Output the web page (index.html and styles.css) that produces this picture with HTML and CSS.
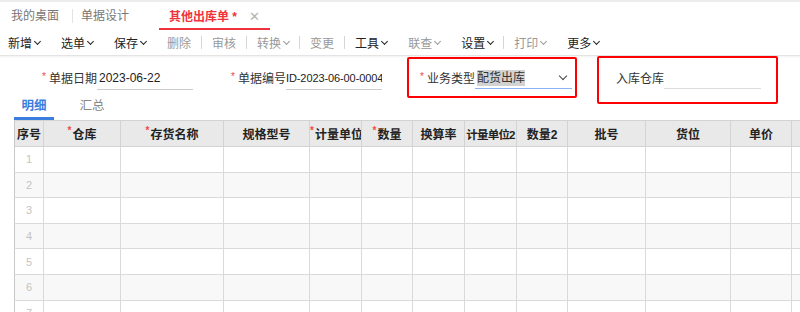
FILE: index.html
```html
<!DOCTYPE html>
<html lang="zh-CN">
<head>
  <meta charset="UTF-8">
  <title>其他出库单</title>
  <link rel="stylesheet" href="styles.css">
</head>
<body>
  <div class="page-tabs">
    <span class="page-tab">我的桌面</span>
    <span class="page-sep"></span>
    <span class="page-tab">单据设计</span>
    <span class="page-tab active">其他出库单 *<span class="close">✕</span></span>
  </div>

  <div class="toolbar">
    <span class="tb-item">新增<i class="chev"></i></span>
    <span class="tb-item">选单<i class="chev"></i></span>
    <span class="tb-item">保存<i class="chev"></i></span>
    <span class="tb-item off">删除</span><span class="tb-sep"></span>
    <span class="tb-item off">审核</span><span class="tb-sep"></span>
    <span class="tb-item off">转换<i class="chev"></i></span><span class="tb-sep"></span>
    <span class="tb-item off">变更</span><span class="tb-sep"></span>
    <span class="tb-item">工具<i class="chev"></i></span>
    <span class="tb-item off">联查<i class="chev"></i></span>
    <span class="tb-item">设置<i class="chev"></i></span><span class="tb-sep"></span>
    <span class="tb-item off">打印<i class="chev"></i></span>
    <span class="tb-item">更多<i class="chev"></i></span>
  </div>

  <div class="form-row">
    <div class="field">
      <span class="req">*</span><span class="label">单据日期</span>
      <span class="input">2023-06-22</span>
    </div>
    <div class="field">
      <span class="req">*</span><span class="label">单据编号</span>
      <span class="input small">ID-2023-06-00-0004</span>
    </div>
    <div class="field">
      <span class="req">*</span><span class="label">业务类型</span>
      <span class="input select"><span class="picked">配货出库</span><i class="chev big"></i></span>
    </div>
    <div class="field">
      <span class="req"></span><span class="label">入库仓库</span>
      <span class="input empty"></span>
    </div>
    <div class="mark mark-a"></div>
    <div class="mark mark-b"></div>
  </div>

  <div class="sub-tabs">
    <span class="sub-tab active">明细</span>
    <span class="sub-tab">汇总</span>
  </div>

  <div class="grid-wrap">
    <table class="grid">
      <colgroup>
        <col style="width:29px"><col style="width:77px"><col style="width:103px"><col style="width:86px">
        <col style="width:52px"><col style="width:51px"><col style="width:52px"><col style="width:52px">
        <col style="width:51px"><col style="width:78px"><col style="width:85px"><col style="width:61px">
        <col style="width:80px">
      </colgroup>
      <thead>
        <tr>
          <th>序号</th>
          <th><span class="star">*</span>仓库</th>
          <th><span class="star">*</span>存货名称</th>
          <th>规格型号</th>
          <th><span class="star">*</span>计量单位</th>
          <th><span class="star">*</span>数量</th>
          <th>换算率</th>
          <th class="tight">计量单位2</th>
          <th>数量2</th>
          <th>批号</th>
          <th>货位</th>
          <th>单价</th>
          <th></th>
        </tr>
      </thead>
      <tbody>
        <tr><td class="no">1</td><td></td><td></td><td></td><td></td><td></td><td></td><td></td><td></td><td></td><td></td><td></td><td></td></tr>
        <tr><td class="no">2</td><td></td><td></td><td></td><td></td><td></td><td></td><td></td><td></td><td></td><td></td><td></td><td></td></tr>
        <tr><td class="no">3</td><td></td><td></td><td></td><td></td><td></td><td></td><td></td><td></td><td></td><td></td><td></td><td></td></tr>
        <tr><td class="no">4</td><td></td><td></td><td></td><td></td><td></td><td></td><td></td><td></td><td></td><td></td><td></td><td></td></tr>
        <tr><td class="no">5</td><td></td><td></td><td></td><td></td><td></td><td></td><td></td><td></td><td></td><td></td><td></td><td></td></tr>
        <tr><td class="no">6</td><td></td><td></td><td></td><td></td><td></td><td></td><td></td><td></td><td></td><td></td><td></td><td></td></tr>
        <tr><td class="no">7</td><td></td><td></td><td></td><td></td><td></td><td></td><td></td><td></td><td></td><td></td><td></td><td></td></tr>
      </tbody>
    </table>
  </div>
</body>
</html>
```

FILE: styles.css
```css
* {
  margin: 0;
  padding: 0;
  box-sizing: border-box;
}

body {
  width: 800px;
  height: 312px;
  overflow: hidden;
  background: #fff;
  font-family: "Liberation Sans", "Noto Sans CJK SC", sans-serif;
  font-size: 12px;
  color: #333;
}

/* page tabs */
.page-tabs {
  height: 30px;
  border-top: 2px solid #ececec;
  display: flex;
  align-items: center;
  padding-left: 11px;
}

.page-tab {
  color: #777;
  height: 28px;
  line-height: 29px;
}

.page-sep {
  width: 1px;
  height: 14px;
  background: #e3e3e3;
  margin: 0 8px 0 13px;
}

.page-tab.active {
  color: #f0323c;
  font-weight: bold;
  margin-left: 30px;
  padding: 0 10px;
  border-bottom: 2px solid #f0323c;
}

.close {
  font-weight: normal;
  color: #b4b4b4;
  font-size: 13px;
  margin-left: 12px;
}

/* toolbar */
.toolbar {
  height: 26px;
  display: flex;
  align-items: center;
  padding-left: 8px;
  border-bottom: 1px solid #e4e4e4;
  box-shadow: 0 1px 2px rgba(0, 0, 0, 0.06);
}

.tb-item {
  color: #222;
  margin-right: 21px;
  display: flex;
  align-items: center;
}

.tb-item.off {
  color: #999;
}

.tb-sep {
  width: 1px;
  height: 13px;
  background: #d6d6d6;
  margin: 0 10px 0 -11px;
}

.chev {
  display: inline-block;
  width: 5px;
  height: 5px;
  border-right: 1.5px solid currentColor;
  border-bottom: 1.5px solid currentColor;
  transform: rotate(45deg);
  margin: -3px 0 0 3px;
}

/* header form */
.form-row {
  position: relative;
  height: 40px;
  display: flex;
  padding: 0 0 0 40px;
}

.field {
  width: 189px;
  display: flex;
  align-items: center;
  padding-top: 3px;
}

.req {
  width: 9px;
  padding-left: 2px;
  color: #f04848;
  font-size: 10px;
  line-height: 10px;
  align-self: center;
  margin-top: -2px;
}

.label {
  width: 48px;
  color: #333;
}

.input {
  width: 96px;
  height: 22px;
  line-height: 21px;
  padding-left: 2px;
  border-bottom: 1px solid #ccc;
  color: #222;
  white-space: nowrap;
  overflow: hidden;
  margin-top: 3px;
}

.input.small {
  font-size: 11px;
  letter-spacing: -0.1px;
  padding-left: 0;
}

.input.select {
  width: 97px;
  display: flex;
  align-items: center;
  justify-content: space-between;
  border-bottom-color: #8ab4f8;
  margin-top: 1px;
}

.picked {
  background: #d2d2d2;
  color: #333;
  line-height: 16px;
}

.chev.big {
  width: 6px;
  height: 6px;
  border-width: 0 1.6px 1.6px 0;
  color: #444;
  margin-right: 6px;
}

.input.empty {
  width: 97px;
  margin-top: 1px;
  border-bottom-color: #ddd;
}

.mark {
  position: absolute;
  border: 2px solid #f00;
  border-radius: 2px;
}

.mark-a {
  left: 407px;
  top: 1px;
  width: 170px;
  height: 41px;
}

.mark-b {
  left: 597px;
  top: 0;
  width: 181px;
  height: 48px;
}

/* sub tabs */
.sub-tabs {
  display: flex;
  height: 24px;
  padding-left: 14px;
}

.sub-tab {
  width: 40px;
  text-align: center;
  color: #888;
  font-size: 12.5px;
  line-height: 20px;
  margin-right: 18px;
}

.sub-tab.active {
  color: #3b7ddd;
  font-weight: bold;
  border-bottom: 3px solid #3b7ddd;
}

/* detail grid */
.grid-wrap {
  padding-left: 14px;
}

.grid {
  border-collapse: collapse;
  table-layout: fixed;
  width: 857px;
}

.grid th {
  height: 26px;
  background: #e9e9e9;
  border: 1px solid #d3d3d3;
  font-weight: bold;
  color: #222;
  white-space: nowrap;
  overflow: hidden;
}

.grid th.tight {
  letter-spacing: -0.8px;
  font-size: 11.5px;
}

.grid th:first-child {
  border-left-color: #c8c8c8;
}

.star {
  color: #f04848;
  font-size: 10px;
  vertical-align: top;
  margin-right: 1px;
}

.grid td {
  height: 25.6px;
  border: 1px solid #dadada;
}

.grid td:first-child {
  border-left-color: #c8c8c8;
}

.grid tbody tr:nth-child(even) td {
  background: #f8f8f8;
}

.grid td.no {
  text-align: center;
  color: #c4c4c4;
  font-size: 11px;
}
```
